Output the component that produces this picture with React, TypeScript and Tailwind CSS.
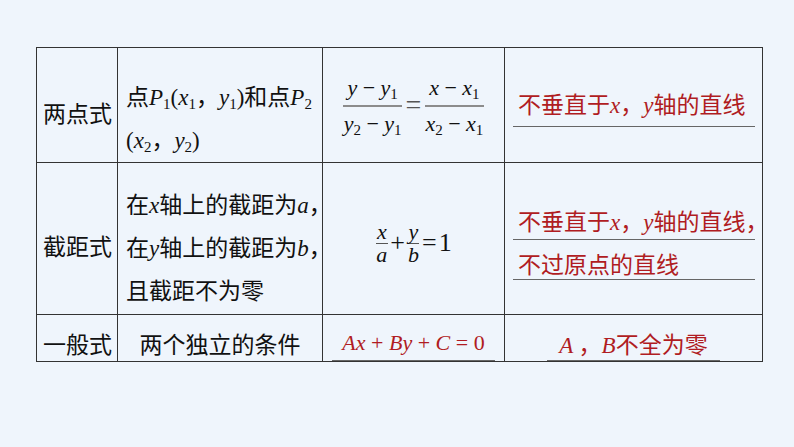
import type { ReactNode } from "react";

// 直线方程的几种形式（两点式 / 截距式 / 一般式）

function M({ children }: { children: ReactNode }) {
  return <span className="font-['Liberation_Serif',serif] italic">{children}</span>;
}

function R({ children }: { children: ReactNode }) {
  return <span className="font-['Liberation_Serif',serif]">{children}</span>;
}

function Sub({ children }: { children: ReactNode }) {
  return (
    <sub className="font-['Liberation_Serif',serif] text-[15px] not-italic">
      {children}
    </sub>
  );
}

function Frac({ num, den }: { num: ReactNode; den: ReactNode }) {
  return (
    <span className="inline-flex flex-col items-center">
      <span className="border-b-2 border-[#8c8c8c] px-[4px] pb-[3px] leading-[28px]">
        {num}
      </span>
      <span className="px-[4px] leading-[28px]">{den}</span>
    </span>
  );
}

function SmallFrac({ num, den }: { num: ReactNode; den: ReactNode }) {
  return (
    <span className="inline-flex flex-col items-center text-[22px]">
      <span className="border-b border-[#555] px-[1px] leading-[22px]">{num}</span>
      <span className="px-[1px] leading-[22px]">{den}</span>
    </span>
  );
}

const cell = "border-b border-r border-[#333]";

export default function App() {
  return (
    <div className="min-h-[447px] w-full bg-[#eff5fc] pl-[36px] pt-[47px] font-['Noto_Sans_CJK_SC',sans-serif] text-[23px] text-[#111]">
      <div className="grid w-[727px] grid-cols-[81px_205px_182px_258px] grid-rows-[115px_152px_47px] border-l border-t border-[#333]">
        {/* 两点式 */}
        <div className={`${cell} pl-[6px] pt-[44px] leading-[40px]`}>两点式</div>
        <div className={`${cell} whitespace-nowrap pl-[8px] pt-[27px] leading-[40px]`}>
          <div>
            点<M>P</M>
            <Sub>1</Sub>
            <R>(</R>
            <M>x</M>
            <Sub>1</Sub>，<M>y</M>
            <Sub>1</Sub>
            <R>)</R>和点<M>P</M>
            <Sub>2</Sub>
          </div>
          <div>
            <R>(</R>
            <M>x</M>
            <Sub>2</Sub>，<M>y</M>
            <Sub>2</Sub>
            <R>)</R>
          </div>
        </div>
        <div className={`${cell} flex items-start justify-center pt-[23px] text-[22px]`}>
          <span className="flex items-center">
            <Frac
              num={
                <>
                  <M>y</M>
                  <R> − </R>
                  <M>y</M>
                  <Sub>1</Sub>
                </>
              }
              den={
                <>
                  <M>y</M>
                  <Sub>2</Sub>
                  <R> − </R>
                  <M>y</M>
                  <Sub>1</Sub>
                </>
              }
            />
            <span className="font-['Liberation_Serif',serif] text-[28px] leading-[28px] text-[#555]">=</span>
            <Frac
              num={
                <>
                  <M>x</M>
                  <R> − </R>
                  <M>x</M>
                  <Sub>1</Sub>
                </>
              }
              den={
                <>
                  <M>x</M>
                  <Sub>2</Sub>
                  <R> − </R>
                  <M>x</M>
                  <Sub>1</Sub>
                </>
              }
            />
          </span>
        </div>
        <div className={`${cell} pt-[35px] text-[#b01c22]`}>
          <div className="ml-[8px] mr-[7px] whitespace-nowrap border-b border-[#666] pl-[5px] leading-[40px]">
            不垂直于<M>x</M>，<M>y</M>轴的直线
          </div>
        </div>

        {/* 截距式 */}
        <div className={`${cell} pl-[6px] pt-[62px] leading-[40px]`}>截距式</div>
        <div className={`${cell} whitespace-nowrap pl-[8px] pt-[20px] leading-[41px]`}>
          <div>
            在<M>x</M>轴上的截距为<M>a</M>，
          </div>
          <div>
            在<M>y</M>轴上的截距为<M>b</M>，
          </div>
          <div>且截距不为零</div>
        </div>
        <div className={`${cell} flex items-center justify-center pt-[9px]`}>
          <span className="flex items-center font-['Liberation_Serif',serif] text-[26px]">
            <SmallFrac num={<M>x</M>} den={<M>a</M>} />
            <span className="px-[2px] leading-[28px]">+</span>
            <SmallFrac num={<M>y</M>} den={<M>b</M>} />
            <span className="px-[2px] leading-[28px]">=</span>
            <span className="leading-[28px]">1</span>
          </span>
        </div>
        <div className={`${cell} pt-[41px] text-[#b01c22]`}>
          <div className="ml-[8px] mr-[7px] whitespace-nowrap border-b border-[#666] pl-[5px] leading-[32px]">
            不垂直于<M>x</M>，<M>y</M>轴的直线，
          </div>
          <div className="ml-[8px] mr-[7px] mt-[7px] border-b border-[#666] pl-[5px] leading-[32px]">
            不过原点的直线
          </div>
        </div>

        {/* 一般式 */}
        <div className={`${cell} pl-[6px] pt-[14px] leading-[28px]`}>一般式</div>
        <div className={`${cell} pt-[14px] text-center leading-[28px]`}>两个独立的条件</div>
        <div className={`${cell} flex justify-center pt-[14px] text-[#b01c22]`}>
          <div className="w-[163px] border-b border-[#666] text-center font-['Liberation_Serif',serif] text-[22px] leading-[28px]">
            <M>Ax</M> + <M>By</M> + <M>C</M> = 0
          </div>
        </div>
        <div className={`${cell} flex justify-center pt-[14px] text-[#b01c22]`}>
          <div className="w-[173px] border-b border-[#666] text-center leading-[28px]">
            <M>A</M> ，<M>B</M>不全为零
          </div>
        </div>
      </div>
    </div>
  );
}
